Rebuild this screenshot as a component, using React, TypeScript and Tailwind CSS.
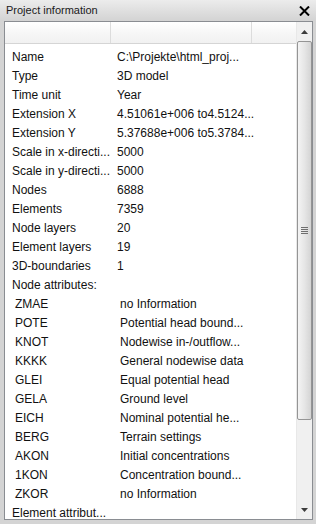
const rows: [string, string][] = [
  ["Name", "C:\\Projekte\\html_proj..."],
  ["Type", "3D model"],
  ["Time unit", "Year"],
  ["Extension X", "4.51061e+006 to4.5124..."],
  ["Extension Y", "5.37688e+006 to5.3784..."],
  ["Scale in x-directi...", "5000"],
  ["Scale in y-directi...", "5000"],
  ["Nodes", "6888"],
  ["Elements", "7359"],
  ["Node layers", "20"],
  ["Element layers", "19"],
  ["3D-boundaries", "1"],
];

const attributes: [string, string][] = [
  ["ZMAE", "no Information"],
  ["POTE", "Potential head bound..."],
  ["KNOT", "Nodewise in-/outflow..."],
  ["KKKK", "General nodewise data"],
  ["GLEI", "Equal potential head"],
  ["GELA", "Ground level"],
  ["EICH", "Nominal potential he..."],
  ["BERG", "Terrain settings"],
  ["AKON", "Initial concentrations"],
  ["1KON", "Concentration bound..."],
  ["ZKOR", "no Information"],
];

const ScrollBar = () => (
  <div className="flex w-[16px] flex-col border-l border-[#e8e8e8] bg-[#f0f0f0]">
    <div className="flex h-[19px] items-center justify-center">
      <svg width="7" height="4" viewBox="0 0 7 4">
        <path d="M0 4 L3.5 0 L7 4 Z" fill="#3c3c3c" />
      </svg>
    </div>
    <div className="flex h-[379px] items-center justify-center rounded-[2px] border border-[#959595] bg-gradient-to-r from-[#f4f4f4] via-[#e6e6e6] to-[#d4d4d4]">
      <div className="flex flex-col gap-[1px]">
        <div className="h-[1px] w-[7px] bg-[#6e6e6e]" />
        <div className="h-[1px] w-[7px] bg-[#6e6e6e]" />
        <div className="h-[1px] w-[7px] bg-[#6e6e6e]" />
        <div className="h-[1px] w-[7px] bg-[#6e6e6e]" />
      </div>
    </div>
    <div className="flex-1" />
    <div className="flex h-[19px] items-center justify-center">
      <svg width="7" height="4" viewBox="0 0 7 4">
        <path d="M0 0 L3.5 4 L7 0 Z" fill="#3c3c3c" />
      </svg>
    </div>
  </div>
);

const App = () => {
  return (
    <div className="flex h-[524px] w-[316px] flex-col bg-[#d4d4d4] font-['Liberation_Sans',Arial,sans-serif] text-[12px] text-[#111]">
      <div className="flex h-[21px] items-center justify-between bg-gradient-to-b from-[#ececec] to-[#d3d3d3] pl-[6px] pr-[6px]">
        <span className="text-[11px] text-[#1a1a1a]">Project information</span>
        <svg width="11" height="10" viewBox="0 0 11 10" className="mt-[1px]">
          <path d="M1 0.5 L10 9.5 M10 0.5 L1 9.5" stroke="#000" strokeWidth="2" />
        </svg>
      </div>
      <div className="mb-[4px] ml-[4px] mr-[3px] flex min-h-0 flex-1 border border-[#8a8d92] bg-white">
        <div className="flex min-w-0 flex-1 flex-col overflow-hidden">
          <div className="flex h-[22px] shrink-0 border-b border-[#d5d5d5] bg-gradient-to-b from-[#ffffff] via-[#f7f7f7] to-[#f1f1f1]">
            <div className="w-[106px] border-r border-[#dcdcdc]" />
            <div className="w-[141px] border-r border-[#dcdcdc]" />
            <div className="flex-1" />
          </div>
          <div className="pt-[3px]">
            {rows.map(([k, v]) => (
              <div key={k} className="flex h-[19px] items-center whitespace-nowrap">
                <span className="w-[112px] shrink-0 pl-[7px]">{k}</span>
                <span>{v}</span>
              </div>
            ))}
            <div className="flex h-[19px] items-center pl-[7px]">Node attributes:</div>
            {attributes.map(([k, v]) => (
              <div key={k} className="flex h-[19px] items-center whitespace-nowrap">
                <span className="w-[115px] shrink-0 pl-[10px]">{k}</span>
                <span>{v}</span>
              </div>
            ))}
            <div className="flex h-[19px] items-center whitespace-nowrap pl-[7px]">Element attribut...</div>
          </div>
        </div>
        <ScrollBar />
      </div>
    </div>
  );
};

export default App;
